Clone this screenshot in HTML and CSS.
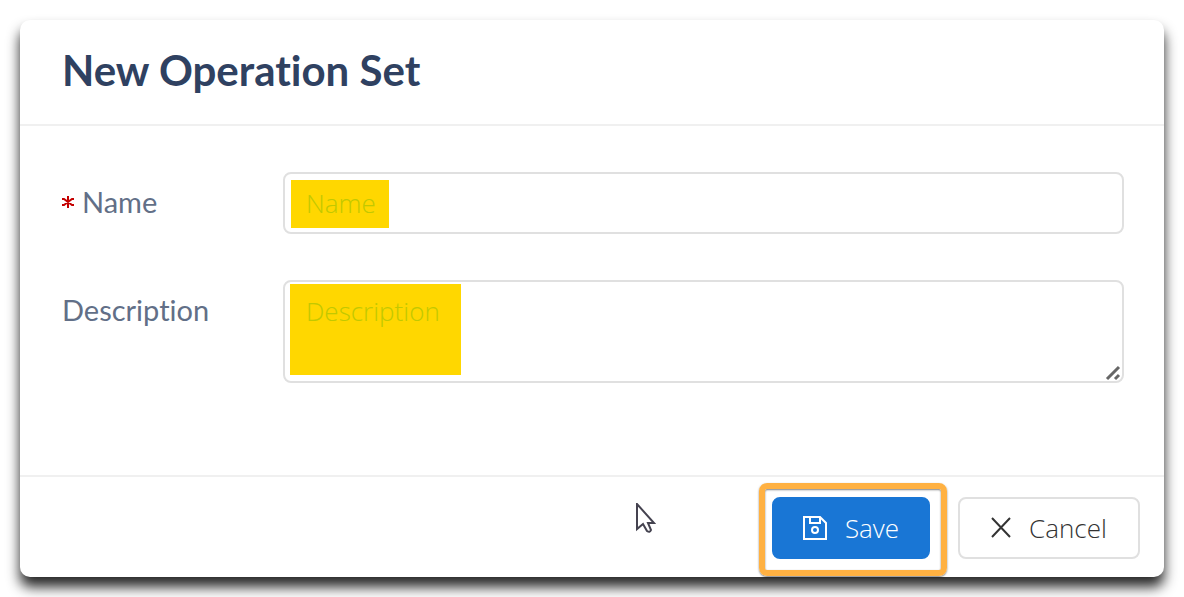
FILE: index.html
```
<!DOCTYPE html>
<html lang="en">

<head>
    <meta charset="UTF-8">
    <meta name="viewport" content="width=device-width, initial-scale=1.0">
    <title>New Operation Set</title>
    <link rel="stylesheet" href="styles.css">
</head>

<body>
    <form class="dialog">
        <div class="header">
            <h1>New Operation Set</h1>
        </div>
        <div class="content">
            <div class="row">
                <label for="name"><svg class="required" width="12" height="18" viewBox="0 0 12 18"><path d="M6 1v12M0 4h2l8 6h2M0 10h2l8-6h2"/></svg>Name</label>
                <div class="field">
                    <input type="text" id="name" placeholder="Name" required>
                </div>
            </div>
            <div class="row">
                <label for="description">Description</label>
                <div class="field">
                    <textarea id="description" placeholder="Description"></textarea>
                    <svg class="grip" width="16" height="16" viewBox="0 0 16 16"><path d="M2 14L14 2M10 14l4-4"/></svg>
                </div>
            </div>
        </div>
        <div class="footer">
            <div class="callout">
                <button type="button" class="btn save">
                    <svg width="24" height="24" viewBox="0 0 24 24"><path d="M1 1h16l6 6v16H1zM7 1v6h10V1"/><circle cx="12" cy="14" r="3"/></svg>
                    <span>Save</span>
                </button>
            </div>
            <button type="button" class="btn cancel">
                <svg width="20" height="22" viewBox="0 0 20 22"><path d="M1 1l18 19M19 1L1 20"/></svg>
                <span>Cancel</span>
            </button>
        </div>
        <!-- mouse pointer -->
        <svg class="pointer" width="20" height="30" viewBox="0 0 20 30"><path d="M1 1v25l6-5 4 7q3 2 4-1l-3-7h6z"/></svg>
    </form>
</body>

</html>
```
FILE: styles.css
```
* {
    box-sizing: border-box;
    margin: 0;
    padding: 0;
}

body {
    padding: 20px;
    background-color: white;
    font-family: "Open Sans", sans-serif;
    font-variant-ligatures: none;
}

.dialog {
    position: relative;
    border-radius: 10px;
    background-color: white;
    box-shadow: 0 10px 13px 0 rgba(0, 0, 0, 0.85);
}

.header {
    padding: 20px 42px 24px;
    border-bottom: 2px solid #f0f0f0;
}

.header h1 {
    color: #2f4161;
    font-family: Lato, sans-serif;
    font-size: 42px;
    line-height: 60px;
}

.content {
    display: grid;
    gap: 46px;
    padding: 46px 40px 92px 42px;
}

.row {
    display: flex;
}

.row label {
    flex: none;
    width: 221px;
    color: #626f87;
    font-family: Lato, sans-serif;
    font-size: 29px;
    line-height: 60px;
}

.required {
    margin-right: 8px;
    fill: none;
    stroke: #c40000;
    stroke-width: 2;
}

.field {
    position: relative;
    flex: 1;
}

.field input,
.field textarea {
    display: block;
    width: 100%;
    padding: 10px 21px;
    border: 2px solid #e0e0e0;
    border-radius: 8px;
    outline: none;
    background: linear-gradient(#ffd700, #ffd700) no-repeat white;
    font-family: "Open Sans", sans-serif;
    font-size: 26px;
    font-weight: 350;
    line-height: 38px;
}

.field input {
    height: 62px;
    background-position: 6px 6px;
    background-size: 98px 48px;
}

.field textarea {
    height: 103px;
    resize: none;
    background-position: 5px 2px;
    background-size: 171px 91px;
}

.field ::placeholder {
    color: #c2c800;
    opacity: 1;
}

.grip {
    position: absolute;
    right: 3px;
    bottom: 2px;
    stroke: #666;
    stroke-width: 3;
}

.footer {
    display: flex;
    justify-content: flex-end;
    gap: 28px;
    padding: 20px 24px 18px;
    border-top: 2px solid #f0f0f0;
}

.btn {
    display: flex;
    align-items: center;
    justify-content: center;
    gap: 18px;
    height: 62px;
    border: 2px solid #e0e0e0;
    border-radius: 8px;
    background-color: white;
    color: #333;
    font-family: "Open Sans", sans-serif;
    font-size: 26px;
    font-weight: 350;
}

.btn svg {
    fill: none;
    stroke: currentColor;
    stroke-width: 2;
}

.save {
    width: 158px;
    border-color: #1976d5;
    background-color: #1976d5;
    color: white;
}

.cancel {
    width: 182px;
}

.callout {
    position: relative;
}

/* orange frame round the save button */
.callout::before {
    content: "";
    position: absolute;
    inset: -14px -17px -17px -13px;
    border: 6px solid #ffb142;
    border-radius: 8px;
    box-shadow: 0 1px 2px rgba(0, 0, 0, 0.5), inset 0 1px 2px rgba(0, 0, 0, 0.5);
    pointer-events: none;
}

.pointer {
    position: absolute;
    left: calc(54% - 2px);
    bottom: 44px;
    fill: white;
    stroke: #454350;
    stroke-width: 2;
    pointer-events: none;
}
```
